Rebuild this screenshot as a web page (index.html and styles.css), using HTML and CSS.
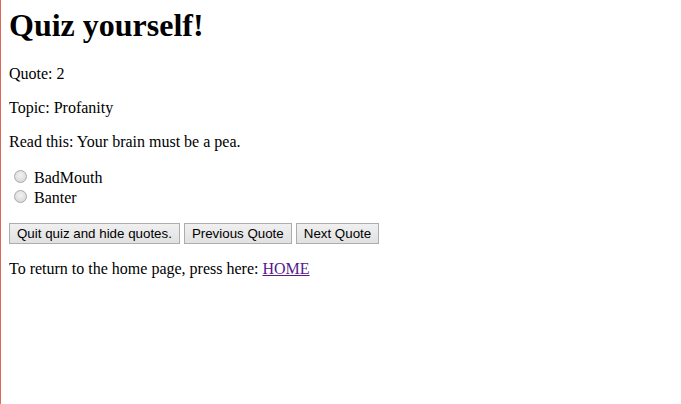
FILE: index.html
```html
<!DOCTYPE html>
<html>
<head>
<meta charset="utf-8">
<title>Quiz</title>
<link rel="stylesheet" href="styles.css">
</head>
<body>
<h1>Quiz yourself!</h1>
<p>Quote: 2</p>
<p>Topic: Profanity</p>
<p>Read this: Your brain must be a pea.</p>
<form class="choices">
<label class="choice"><input type="radio" name="ans" class="radio"> BadMouth</label><br>
<label class="choice"><input type="radio" name="ans" class="radio"> Banter</label>
</form>
<p class="buttons"><button class="btn">Quit quiz and hide quotes.</button> <button class="btn">Previous Quote</button> <button class="btn">Next Quote</button></p>
<p>To return to the home page, press here: <a href="#" class="home">HOME</a></p>
</body>
</html>
```

FILE: styles.css
```css
html {
  border-left: 1px solid #e0675b;
  min-height: 100%;
  box-sizing: border-box;
}
body {
  margin: 8px;
  font-family: "Liberation Serif", "Times New Roman", serif;
  font-size: 16px;
  color: #000;
}
h1 {
  font-size: 32px;
  margin: -1px 0 21px;
}
.choices {
  margin: 0 0 16px;
}
.radio {
  -webkit-appearance: none;
  appearance: none;
  width: 13px;
  height: 13px;
  margin: 3px 3px 0 5px;
  border: 1px solid #a9a9a9;
  border-radius: 50%;
  background: radial-gradient(circle at 50% 40%, #f2f2f2 0%, #dcdcdc 70%, #cfcfcf 100%);
  box-sizing: border-box;
  vertical-align: baseline;
}
.btn {
  font-family: "Liberation Sans", Arial, sans-serif;
  font-size: 13.33px;
  color: #000;
  background: linear-gradient(#f0f0f0, #e1e1e1);
  border: 1px solid #adadad;
  border-radius: 0;
  padding: 2px 7px;
  margin: 0;
}
.home {
  color: #551a8b;
}
```
